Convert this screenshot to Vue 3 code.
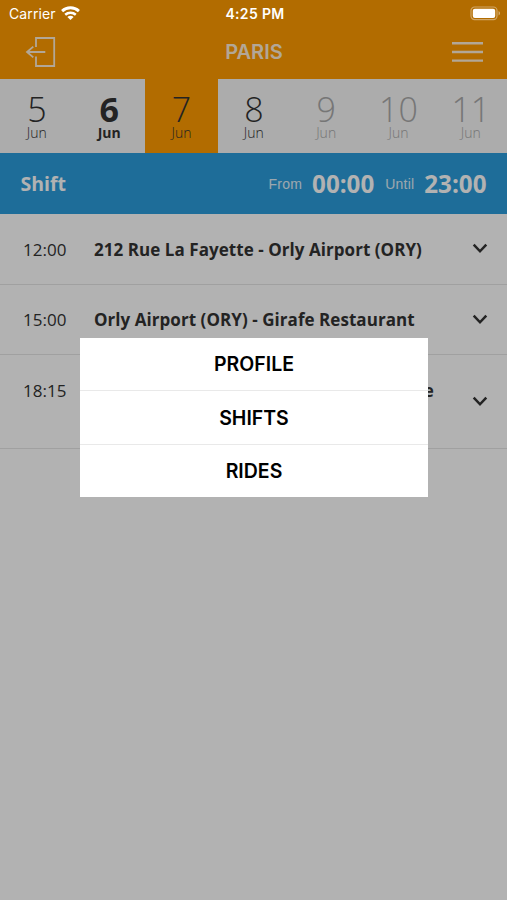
<template>
  <div class="screen">
    <div class="status-bar">
      <div class="status-bar__carrier">
        <span>Carrier</span>
        <svg class="wifi" width="19" height="14" viewBox="0 0 19 14" fill="none" stroke="#fff" stroke-width="2.9">
          <path d="M1.1 5.1C5.8 .7 13.2 .7 17.9 5.1" />
          <path d="M4.2 8.8C7.2 6.1 11.8 6.1 14.8 8.8" stroke-width="2.5" />
          <path d="M9.5 14L6.4 11C8.2 9.4 10.8 9.4 12.6 11Z" fill="#fff" stroke="none" />
        </svg>
      </div>
      <span class="status-bar__time">4:25 PM</span>
      <svg class="battery" width="31" height="15" viewBox="0 0 31 15">
        <rect x="1" y="1" width="26" height="12.6" rx="3.6" fill="none" stroke="#fff" stroke-opacity=".4" stroke-width="1.2" />
        <rect x="2.8" y="2.7" width="22.4" height="9.2" rx="2" fill="#fff" />
        <path d="M28.6 5.1C30.4 5.8 30.4 8.8 28.6 9.5Z" fill="#fff" fill-opacity=".5" />
      </svg>
    </div>

    <header class="navbar">
      <svg class="navbar__exit" width="31" height="32" viewBox="0 0 31 32" fill="none" stroke="#fff" stroke-width="1.8">
        <path d="M11 11V2H29.2V30H11V20.5" />
        <path d="M20.3 16H2M8.3 10.6L2 16L8.3 21.4" />
      </svg>
      <h1 class="navbar__title">PARIS</h1>
      <svg class="navbar__menu" width="31" height="22" viewBox="0 0 31 22" stroke="#fff" stroke-width="2.4">
        <path d="M0 2.3H31M0 11H31M0 19.6H31" />
      </svg>
    </header>

    <div class="days">
      <div v-for="day in days" :key="day.number" class="day" :class="day.state && `day--${day.state}`">
        <span class="day__number">{{ day.number }}</span>
        <span class="day__month">Jun</span>
      </div>
    </div>

    <div class="shift">
      <span class="shift__title">Shift</span>
      <span class="shift__label">From</span>
      <span class="shift__hour">00:00</span>
      <span class="shift__label">Until</span>
      <span class="shift__hour">23:00</span>
    </div>

    <ul class="rides">
      <li v-for="ride in rides" :key="ride.time" class="ride">
        <span class="ride__time">{{ ride.time }}</span>
        <span class="ride__route">{{ ride.route }}</span>
        <svg class="ride__arrow" width="16" height="11" viewBox="0 0 16 11" fill="none" stroke="#333" stroke-width="2.5">
          <path d="M1.7 1.6L8 8.3L14.3 1.6" />
        </svg>
      </li>
    </ul>

    <div class="overlay">
      <nav class="menu">
        <a v-for="item in menuItems" :key="item" class="menu__item">{{ item }}</a>
      </nav>
    </div>
  </div>
</template>

<script setup>
  import { ref } from 'vue';

  const days = ref([
    { number: 5 },
    { number: 6, state: 'today' },
    { number: 7, state: 'selected' },
    { number: 8 },
    { number: 9, state: 'disabled' },
    { number: 10, state: 'disabled' },
    { number: 11, state: 'disabled' },
  ]);

  const rides = ref([
    { time: '12:00', route: '212 Rue La Fayette - Orly Airport (ORY)' },
    { time: '15:00', route: 'Orly Airport (ORY) - Girafe Restaurant' },
    { time: '18:15', route: 'Girafe Restaurant - Paris Rue La Fayette 212' },
  ]);

  const menuItems = ['PROFILE', 'SHIFTS', 'RIDES'];
</script>

<style>
body {
  margin: 0;
}
</style>

<style scoped>
.screen {
  position: relative;
  box-sizing: border-box;
  width: 507px;
  height: 900px;
  overflow: hidden;
  background-color: #fff;
  color: #333;
  font-family: "Open Sans", "Noto Sans", sans-serif;
}

.status-bar {
  position: relative;
  z-index: 2;
  display: grid;
  grid-template-columns: 1fr auto 1fr;
  align-items: center;
  box-sizing: border-box;
  height: 27px;
  padding: 0 6px 0 9px;
  color: #fff;
  font-family: Inter, "Liberation Sans", sans-serif;
  font-size: 14px;
}

.status-bar__carrier {
  display: flex;
  align-items: center;
  gap: 5px;
  letter-spacing: 0.1px;
}

.status-bar__time {
  font-weight: 600;
  letter-spacing: 0.35px;
}

.wifi {
  margin-top: -2px;
}

.battery {
  justify-self: end;
}

.navbar {
  display: flex;
  align-items: center;
  justify-content: space-between;
  box-sizing: border-box;
  height: 79px;
  margin-top: -27px;
  padding: 25px 24px 0 25px;
  background-color: #ff9b00;
}

.navbar__title {
  margin: 0;
  color: #fff;
  font-family: Inter, "Liberation Sans", sans-serif;
  font-size: 20px;
  font-weight: 600;
}

.navbar__exit,
.navbar__menu,
.navbar__title {
  opacity: 0.85;
}

.days {
  display: grid;
  grid-template-columns: repeat(7, 1fr);
  height: 73.5px;
  padding-left: 0.7px;
  background-color: #f6f6f6;
}

.day {
  display: flex;
  flex-direction: column;
  align-items: center;
  padding-top: 13px;
}

.day__number {
  font-size: 34px;
  font-weight: 300;
  line-height: 34px;
}

.day__month {
  font-size: 14px;
  font-weight: 300;
  line-height: 14px;
}

.day--today .day__number,
.day--today .day__month {
  font-weight: 700;
}

.day--selected {
  background-color: #ff9b00;
}

.day--disabled {
  color: #aaa;
}

.shift {
  display: flex;
  align-items: center;
  box-sizing: border-box;
  height: 61.5px;
  padding: 0 20.5px;
  background-color: #2c9ddc;
  color: #fff;
}

.shift__title {
  flex: 1;
  font-size: 19.5px;
  font-weight: 700;
}

.shift__label {
  margin: 2px 10px 0 0;
  font-family: "Liberation Sans", sans-serif;
  font-size: 14px;
  letter-spacing: 0.2px;
  opacity: 0.85;
}

.shift__hour {
  font-size: 24.2px;
  font-weight: 700;
}

.shift__hour + .shift__label {
  margin-left: 11px;
}

.rides {
  margin: 0;
  padding: 0.6px 0 0;
  list-style: none;
}

.ride {
  display: flex;
  align-items: center;
  box-sizing: border-box;
  padding: 23.4px 19px 22.6px 23px;
  border-bottom: 1px solid #e6e6e6;
  font-size: 17px;
  line-height: 23.4px;
}

.ride__time {
  align-self: flex-start;
  width: 71px;
}

.ride__route {
  width: 345px;
  font-weight: 700;
  letter-spacing: 0.05px;
}

.ride__arrow {
  margin: -2px 0 0 auto;
}

.overlay {
  position: absolute;
  inset: 0;
  z-index: 1;
  background-color: rgba(0, 0, 0, 0.3);
}

.menu {
  width: 347.2px;
  margin: 338px 0 0 80.4px;
  background-color: #fff;
  color: #000;
  font-family: Inter, "Liberation Sans", sans-serif;
  font-size: 19.5px;
  font-weight: 600;
}

.menu__item {
  display: flex;
  align-items: center;
  justify-content: center;
  height: 52px;
}

.menu__item + .menu__item {
  box-sizing: border-box;
  height: 53.5px;
  padding-top: 1px;
  border-top: 1px solid #e9e9e9;
}
</style>
